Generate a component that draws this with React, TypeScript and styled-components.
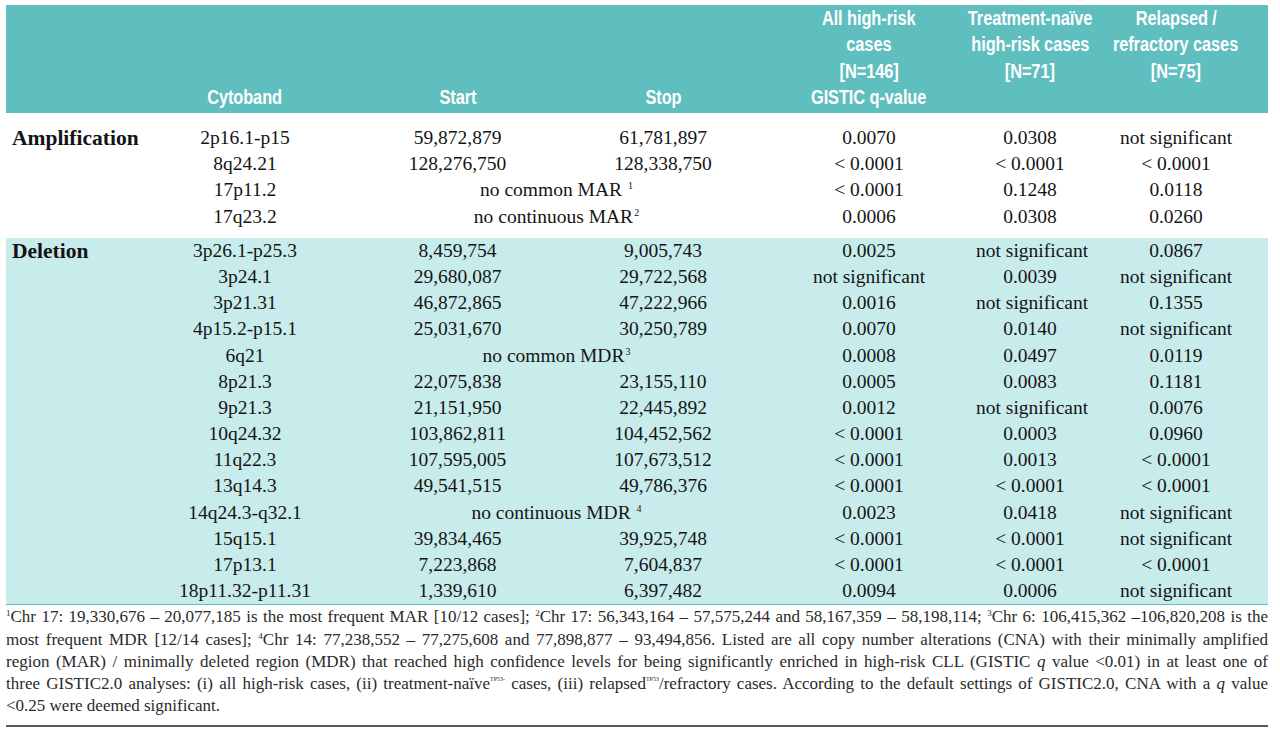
import React from 'react'
import styled, { createGlobalStyle } from 'styled-components'

const GlobalStyle = createGlobalStyle`
    html, body {
        margin: 0;
        padding: 0;
        background: #fff;
    }
`

const COLS = '133px 212px 213px 198px 214px 108px 184px'

const Page = styled.div`
    padding: 5px 12px 0 6px;
    width: 1262px;
    color: #141414;
    font-family: "Liberation Serif", "Times New Roman", serif;
`

const Header = styled.div`
    display: grid;
    grid-template-columns: ${COLS};
    height: 108px;
    padding-bottom: 3px;
    box-sizing: border-box;
    background: #5fbebe;
    color: #fff;
    font-family: "Liberation Sans", Arial, sans-serif;
    font-weight: 700;
    font-size: 19.5px;
    line-height: 26.3px;
`

const HeadCell = styled.div<{ $top?: boolean }>`
    display: flex;
    flex-direction: column;
    align-items: center;
    justify-content: ${p => (p.$top ? 'flex-start' : 'flex-end')};
    white-space: nowrap;
`

// the printed header face is a condensed grotesque, squeeze the glyphs to match
const HeadText = styled.span`
    display: inline-block;
    transform: scaleX(0.84);
    letter-spacing: -0.1px;
`

const Section = styled.div<{ $tint?: boolean }>`
    background: ${p => (p.$tint ? '#c8ebeb' : '#fff')};
    padding: ${p => (p.$tint ? '0' : '12px 0 8px')};
    border-bottom: ${p => (p.$tint ? '1px solid #5fbebe' : 'none')};
`

const Row = styled.div`
    display: grid;
    grid-template-columns: ${COLS};
    height: 26.2px;
    font-size: 19.5px;
    line-height: 26.2px;
`

const Label = styled.div`
    padding-left: 6px;
    font-weight: 700;
    font-size: 21.5px;
    white-space: nowrap;
`

const Cell = styled.div<{ $span?: number }>`
    text-align: center;
    white-space: nowrap;
    grid-column: ${p => (p.$span ? `span ${p.$span}` : 'auto')};
    sup {
        font-size: 10px;
        line-height: 0;
        vertical-align: 7px;
        margin-left: 1px;
    }
`

const Notes = styled.div`
    padding-top: 1px;
    font-size: 17px;
    line-height: 22.2px;
    color: #2a2a2a;
    sup {
        font-size: 9px;
        line-height: 0;
        vertical-align: 6px;
    }
    .tp {
        font-size: 6px;
        vertical-align: 8px;
    }
    i {
        font-style: italic;
    }
`

const NoteLine = styled.div<{ $last?: boolean }>`
    text-align: ${p => (p.$last ? 'left' : 'justify')};
    text-align-last: ${p => (p.$last ? 'left' : 'justify')};
    white-space: nowrap;
`

const Rule = styled.div`
    margin-top: 8px;
    height: 2px;
    background: #5a5a5a;
`

type Line = [string, ...React.ReactNode[]]

const amplification: Line[] = [
    ['2p16.1-p15', '59,872,879', '61,781,897', '0.0070', '0.0308', 'not significant'],
    ['8q24.21', '128,276,750', '128,338,750', '< 0.0001', '< 0.0001', '< 0.0001'],
    ['17p11.2', <>no common MAR <sup>1</sup></>, '< 0.0001', '0.1248', '0.0118'],
    ['17q23.2', <>no continuous MAR<sup>2</sup></>, '0.0006', '0.0308', '0.0260'],
]

const deletion: Line[] = [
    ['3p26.1-p25.3', '8,459,754', '9,005,743', '0.0025', 'not significant', '0.0867'],
    ['3p24.1', '29,680,087', '29,722,568', 'not significant', '0.0039', 'not significant'],
    ['3p21.31', '46,872,865', '47,222,966', '0.0016', 'not significant', '0.1355'],
    ['4p15.2-p15.1', '25,031,670', '30,250,789', '0.0070', '0.0140', 'not significant'],
    ['6q21', <>no common MDR<sup>3</sup></>, '0.0008', '0.0497', '0.0119'],
    ['8p21.3', '22,075,838', '23,155,110', '0.0005', '0.0083', '0.1181'],
    ['9p21.3', '21,151,950', '22,445,892', '0.0012', 'not significant', '0.0076'],
    ['10q24.32', '103,862,811', '104,452,562', '< 0.0001', '0.0003', '0.0960'],
    ['11q22.3', '107,595,005', '107,673,512', '< 0.0001', '0.0013', '< 0.0001'],
    ['13q14.3', '49,541,515', '49,786,376', '< 0.0001', '< 0.0001', '< 0.0001'],
    ['14q24.3-q32.1', <>no continuous MDR <sup>4</sup></>, '0.0023', '0.0418', 'not significant'],
    ['15q15.1', '39,834,465', '39,925,748', '< 0.0001', '< 0.0001', 'not significant'],
    ['17p13.1', '7,223,868', '7,604,837', '< 0.0001', '< 0.0001', '< 0.0001'],
    ['18p11.32-p11.31', '1,339,610', '6,397,482', '0.0094', '0.0006', 'not significant'],
]

const renderRows = (title: string, rows: Line[]) =>
    rows.map((r, i) => {
        // merged start/stop cell when there is no common region
        const merged = r.length === 5
        return (
            <Row key={title + i}>
                <Label>{i === 0 ? title : ''}</Label>
                <Cell>{r[0]}</Cell>
                {merged ? (
                    <Cell $span={2}>{r[1]}</Cell>
                ) : (
                    <>
                        <Cell>{r[1]}</Cell>
                        <Cell>{r[2]}</Cell>
                    </>
                )}
                {r.slice(merged ? 2 : 3).map((v, j) => (
                    <Cell key={j}>{v}</Cell>
                ))}
            </Row>
        )
    })

export default function App() {
    return (
        <>
            <GlobalStyle />
            <Page>
                <Header>
                    <HeadCell />
                    <HeadCell><HeadText>Cytoband</HeadText></HeadCell>
                    <HeadCell><HeadText>Start</HeadText></HeadCell>
                    <HeadCell><HeadText>Stop</HeadText></HeadCell>
                    <HeadCell>
                        <HeadText>All high-risk</HeadText>
                        <HeadText>cases</HeadText>
                        <HeadText>[N=146]</HeadText>
                        <HeadText>GISTIC q-value</HeadText>
                    </HeadCell>
                    <HeadCell $top>
                        <HeadText>Treatment-naïve</HeadText>
                        <HeadText>high-risk cases</HeadText>
                        <HeadText>[N=71]</HeadText>
                    </HeadCell>
                    <HeadCell $top>
                        <HeadText>Relapsed /</HeadText>
                        <HeadText>refractory cases</HeadText>
                        <HeadText>[N=75]</HeadText>
                    </HeadCell>
                </Header>
                <Section>{renderRows('Amplification', amplification)}</Section>
                <Section $tint>{renderRows('Deletion', deletion)}</Section>
                <Notes>
                    <NoteLine>
                        <sup>1</sup>Chr 17: 19,330,676 – 20,077,185 is the most frequent MAR [10/12 cases]; <sup>2</sup>Chr 17: 56,343,164 – 57,575,244 and 58,167,359 – 58,198,114; <sup>3</sup>Chr 6: 106,415,362 –106,820,208 is the
                    </NoteLine>
                    <NoteLine>
                        most frequent MDR [12/14 cases]; <sup>4</sup>Chr 14: 77,238,552 – 77,275,608 and 77,898,877 – 93,494,856. Listed are all copy number alterations (CNA) with their minimally amplified
                    </NoteLine>
                    <NoteLine>
                        region (MAR) / minimally deleted region (MDR) that reached high confidence levels for being significantly enriched in high-risk CLL (GISTIC <i>q</i> value &lt;0.01) in at least one of
                    </NoteLine>
                    <NoteLine>
                        three GISTIC2.0 analyses: (i) all high-risk cases, (ii) treatment-naïve<sup className="tp">TP53-</sup> cases, (iii) relapsed<sup className="tp">TP53</sup>/refractory cases. According to the default settings of GISTIC2.0, CNA with a <i>q</i> value
                    </NoteLine>
                    <NoteLine $last>&lt;0.25 were deemed significant.</NoteLine>
                </Notes>
                <Rule />
            </Page>
        </>
    )
}
